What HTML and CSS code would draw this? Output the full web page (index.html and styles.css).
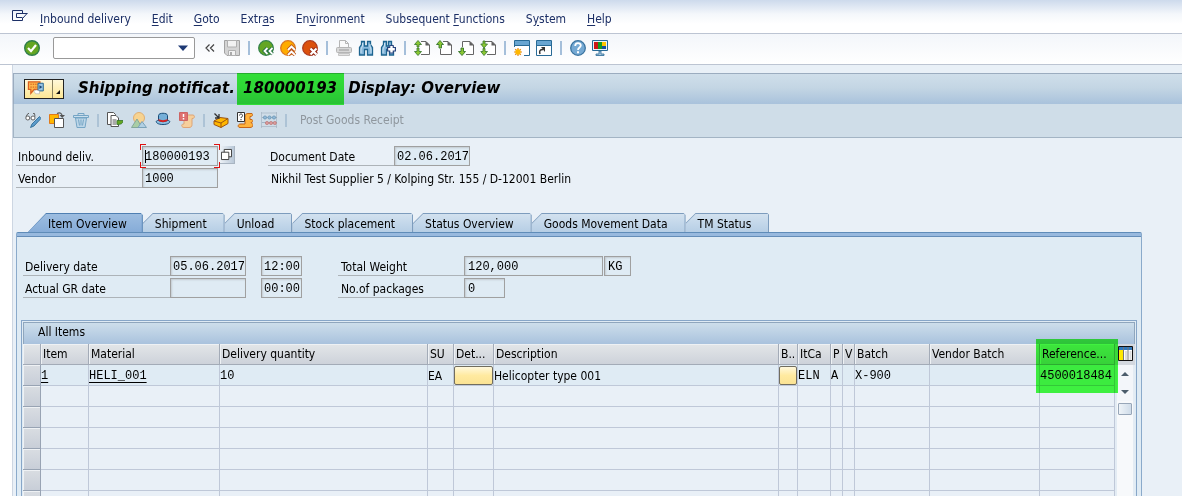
FILE: index.html
```html
<!DOCTYPE html>
<html lang="en">
<head>
<meta charset="utf-8">
<title>Shipping notificat. 180000193 Display: Overview</title>
<link rel="stylesheet" href="styles.css">
</head>
<body>
<nav class="menu" aria-label="Menu">
  <button class="icon menu-icon" aria-label="System menu"><svg viewBox="0 0 16 16"><path d="M10.500 4V1.500h-10v10h10V9M15.500 4.500h-11v4h6M15 4.500l-4 4.500" fill="none" stroke="#1c2f66"/></svg></button>
  <button class="menu-item"><u>I</u>nbound delivery</button>
  <button class="menu-item"><u>E</u>dit</button>
  <button class="menu-item"><u>G</u>oto</button>
  <button class="menu-item">Extr<u>a</u>s</button>
  <button class="menu-item">En<u>v</u>ironment</button>
  <button class="menu-item">Subsequent <u>F</u>unctions</button>
  <button class="menu-item">S<u>y</u>stem</button>
  <button class="menu-item"><u>H</u>elp</button>
</nav>

<div class="toolbar">
  <button class="icon" aria-label="Enter"><svg viewBox="0 0 16 16"><circle cx="8" cy="8" r="7.300" fill="#64a622" stroke="#2f7d4c" stroke-width="1.400"/><path d="M4 8l3 3.200 5-6.200" fill="none" stroke="#fff" stroke-width="2.200"/></svg></button>
  <div class="command">
    <input class="command-input" type="text" aria-label="Command">
    <button class="command-drop" aria-label="Command history"><svg viewBox="0 0 10 6"><path d="M0 .5h10L5 6z" fill="#1f3a75"/></svg></button>
  </div>
  <button class="icon collapse" aria-label="Collapse"><svg viewBox="0 0 16 16"><path d="M7.500 4.500L4 8l3.500 3.500M12 4.500L8.500 8l3.500 3.500" fill="none" stroke="#444" stroke-width="1.200"/></svg></button>
  <button class="icon" aria-label="Save"><svg viewBox="0 0 16 16"><path d="M.5.5h15v15H3l-2.500-2.500z" fill="#d4d4d4" stroke="#a2a2a2"/><path d="M3.500.5h9v6.500h-9z" fill="#f2f2f2" stroke="#b0b0b0"/><path d="M4.500 10.500h7v5h-7z" fill="#f2f2f2" stroke="#b0b0b0"/><path d="M6 12h2v3H6z" fill="#aaa"/></svg></button>
  <span class="sep"></span>
  <button class="icon" aria-label="Back"><svg viewBox="0 0 16 16"><circle cx="8" cy="8" r="7.300" fill="#64a622" stroke="#34834a" stroke-width="1.300"/><path d="M9.500 8L6.500 11l3 3M14.500 8l-3 3 3 3" fill="none" stroke="#24713f" stroke-width="3.600"/><path d="M9.500 8L6.500 11l3 3M14.500 8l-3 3 3 3" fill="none" stroke="#fff" stroke-width="1.800"/></svg></button>
  <button class="icon" aria-label="Exit"><svg viewBox="0 0 16 16"><circle cx="8" cy="8" r="7.300" fill="#ffac00" stroke="#da7722" stroke-width="1.300"/><path d="M8 10l3.500-3.500L15 10M8 15l3.500-3.500L15 15" fill="none" stroke="#bc5a20" stroke-width="3.600"/><path d="M8 10l3.500-3.500L15 10M8 15l3.500-3.500L15 15" fill="none" stroke="#fff" stroke-width="1.800"/></svg></button>
  <button class="icon" aria-label="Cancel"><svg viewBox="0 0 16 16"><circle cx="8" cy="8" r="7.300" fill="#dc510d" stroke="#ad3c20" stroke-width="1.300"/><path d="M8.500 8.500l6 6M14.500 8.500l-6 6" stroke="#952b18" stroke-width="4"/><path d="M8.500 8.500l6 6M14.500 8.500l-6 6" stroke="#fff" stroke-width="2.200"/></svg></button>
  <span class="sep"></span>
  <button class="icon" aria-label="Print"><svg viewBox="0 0 16 16"><path d="M3.500 8V.5h6l3 3V8" fill="#fafafa" stroke="#b5b5b5"/><path d="M9.500.5v3h3" fill="none" stroke="#b5b5b5"/><rect x=".5" y="7.500" width="15" height="5" rx="1" fill="#d8d8d8" stroke="#b5b5b5"/><path d="M3 10h10" stroke="#999"/><path d="M2.500 13.500h11v2h-11z" fill="#e2e2e2" stroke="#c4c4c4"/></svg></button>
  <button class="icon" aria-label="Find"><svg viewBox="0 0 16 16"><path d="M3.500 1.500h3v4.500h3V1.500h3v3l2 3v7.500h-5V9.500h-3V15h-5V7.500l2-3z" fill="#88b9dc" stroke="#1d648f" stroke-width="1.300"/><path d="M4.500 3v3l-1.500 3v4M12 4v3l1 2v4" fill="none" stroke="#c9e1f1"/></svg></button>
  <button class="icon" aria-label="Find next"><svg viewBox="0 0 16 16"><path d="M3.500 1.500h3v4.500h2V1.500h3v3l2 3v7.500h-4V9.500h-3V15h-5V7.500l2-3z" fill="#88b9dc" stroke="#1d648f" stroke-width="1.300"/><path d="M4.500 3v3l-1.500 3v4" fill="none" stroke="#c9e1f1"/><path d="M11.500 5v8.500M7 9.200h9" stroke="#29447d" stroke-width="4.500"/><path d="M11.500 6v6.500M8.200 9.200h6.600" stroke="#fff" stroke-width="2.400"/></svg></button>
  <span class="sep"></span>
  <button class="icon" aria-label="First page"><svg viewBox="0 0 16 16"><path d="M7 1.500h5l3.500 3.500v9.500H7" fill="#fff" stroke="#666"/><path d="M11.500 1v4.500H16z" fill="#5f5f5f"/><path d="M4 .5L.5 4.500H3V7h2V4.500h2.500zM4 15.500L.5 11.500H3V8h2v3.500h2.500z" fill="#8cc832" stroke="#35752b" stroke-width=".8"/></svg></button>
  <button class="icon" aria-label="Previous page"><svg viewBox="0 0 16 16"><path d="M7 1.500h5l3.500 3.500v9.500h-11V9" fill="#fff" stroke="#666"/><path d="M11.500 1v4.500H16z" fill="#5f5f5f"/><path d="M4 .5L.5 4.500H3V8h2.500V4.500h2z" fill="#8cc832" stroke="#35752b" stroke-width=".9"/></svg></button>
  <button class="icon" aria-label="Next page"><svg viewBox="0 0 16 16"><path d="M4.500 7V1.500H12l3.500 3.500v9.500H8" fill="#fff" stroke="#666"/><path d="M11.500 1v4.500H16z" fill="#5f5f5f"/><path d="M4 15.500L.5 11.500H3V8h2.500v3.500h2z" fill="#8cc832" stroke="#35752b" stroke-width=".9"/></svg></button>
  <button class="icon" aria-label="Last page"><svg viewBox="0 0 16 16"><path d="M5 1.500h7l3.500 3.500v9.500H7" fill="#fff" stroke="#666"/><path d="M11.500 1v4.500H16z" fill="#5f5f5f"/><path d="M3 1v3H.8L4 8l3.500-4H5V1zM3 8.500v3H.8L4 15.500l3.500-4H5v-3z" fill="#8cc832" stroke="#35752b" stroke-width=".8"/></svg></button>
  <span class="sep"></span>
  <button class="icon" aria-label="New session"><svg viewBox="0 0 16 16"><path d="M.5 7V.5h15v15H10" fill="#fff" stroke="#286a96"/><path d="M1 1h14v4H1z" fill="#68a5d1"/><path d="M0 5.500h16" stroke="#286a96"/><path d="M4 8v8M0 12h8M1.200 9.200l5.600 5.600M6.800 9.200l-5.600 5.600" stroke="#e28618" stroke-width="1.200"/><circle cx="4" cy="12" r="2.700" fill="#ffb700"/></svg></button>
  <button class="icon" aria-label="Create shortcut"><svg viewBox="0 0 16 16"><path d="M.5.5h15v15H.5z" fill="#fff" stroke="#286a96"/><path d="M1 1h14v4H1z" fill="#68a5d1"/><path d="M0 5.500h16" stroke="#286a96"/><path d="M4 14c-1-3 0-4.500 3-4.500" fill="none" stroke="#333" stroke-width="1.500"/><path d="M5 7h4v5z" fill="#333"/></svg></button>
  <span class="sep"></span>
  <button class="icon" aria-label="Help"><svg viewBox="0 0 16 16"><circle cx="8" cy="8" r="7.300" fill="#75a9d3" stroke="#3a739f" stroke-width="1.300"/><path d="M5.200 6c0-4 5.600-3.600 5.600-.5C10.800 7.500 8 7.500 8 10" fill="none" stroke="#fff" stroke-width="1.800"/><path d="M7 11.300h2v2H7z" fill="#fff"/></svg></button>
  <button class="icon" aria-label="Customize layout"><svg viewBox="0 0 16 16"><path d="M.5.500h15v10H.5z" fill="#e9f3fa" stroke="#286a96"/><path d="M2 2h4v7H2z" fill="#ce1717"/><path d="M6 2h4v7H6z" fill="#159a1e"/><path d="M10 2h4v4h-4z" fill="#ffc400"/><path d="M10 6h4v3h-4z" fill="#114f9e"/><path d="M7 11h2v3h3v1.500H4V14h3z" fill="#a9c6de" stroke="#286a96" stroke-width=".8"/></svg></button>
</div>

<main class="work">
  <header class="title-bar">
    <div class="services">
      <button class="service-main" aria-label="Services for object"><svg viewBox="0 0 24 18"><path d="M1.500 1.500h12v8h-6l-3.500 4v-4H1.500z" fill="#ffb64b" stroke="#db5f20" stroke-width="1.300"/><path d="M3.500 4h8M3.500 7h8" stroke="#cf5417" stroke-dasharray="1.500 1"/><path d="M11.500 3h5.500v8h-5.500z" fill="#9bc6e5" stroke="#24648f"/><path d="M13 5l3 2-3 2z" fill="#1d4877"/><path d="M7 11l3-1 3 1v3H9z" fill="#fff" stroke="#aaa" stroke-width=".6"/></svg></button>
      <button class="service-drop" aria-label="More services"><svg viewBox="0 0 6 6"><path d="M5 1v4H1z" fill="#111"/></svg></button>
    </div>
    <h1 class="title">Shipping notificat. <mark class="title-mark">180000193</mark> Display: Overview</h1>
  </header>

  <div class="app-bar">
    <button class="icon" aria-label="Display/Change"><svg viewBox="0 0 16 16"><circle cx="2.800" cy="6" r="2" fill="#fff" stroke="#555" stroke-width=".9"/><circle cx="8" cy="6" r="2" fill="#fff" stroke="#555" stroke-width=".9"/><path d="M1 4.500L3 1.500h1M8 1.500h1.500l.5 3" fill="none" stroke="#555" stroke-width=".9"/><path d="M14.500 4.500L7 12l-1.500 3.500L9 14l7-7.500z" fill="#5b9bcc" stroke="#24648f" stroke-width=".8"/></svg></button>
    <button class="icon" aria-label="Other delivery"><svg viewBox="0 0 16 16"><path d="M.5 2.500h9v9h-9z" fill="#ffb700" stroke="#e07a1a"/><path d="M5.500 6.500h9v9h-9z" fill="#fff" stroke="#555"/><path d="M8 1.500c3-1.500 5 0 5 2" fill="none" stroke="#555" stroke-width="1.200"/><path d="M10.500 3H16l-2.800 3z" fill="#555"/></svg></button>
    <button class="icon" aria-label="Delete"><svg viewBox="0 0 16 16"><path d="M2.500 6h11L12 15.500H4z" fill="#bdd6e8" stroke="#75a5c5"/><path d="M.5 3.500h15v2H.500z" fill="#cbdfed" stroke="#75a5c5"/><path d="M5 3.500v-2h6v2M5.500 7.500l1 6M8 7.500v6M10.500 7.500l-1 6" fill="none" stroke="#75a5c5"/></svg></button>
    <span class="sep sep-app"></span>
    <button class="icon" aria-label="Document flow"><svg viewBox="0 0 16 16"><path d="M.5.5h6l2 2v10h-8z" fill="#fff" stroke="#555"/><path d="M4 3.500h5l2.500 2.500v8.500H4z" fill="#fff" stroke="#555"/><path d="M5.500 8h4M5.500 10h4M5.500 12h4" stroke="#555"/><path d="M10 8.500h6c0 3-2 4-6 4z" fill="#64a622" stroke="#35752b" stroke-width=".8"/></svg></button>
    <button class="icon" aria-label="Delivery overview"><svg viewBox="0 0 16 16"><circle cx="8" cy="6" r="5.500" fill="#f7d390" stroke="#dfae73"/><path d="M.5 15.500L6 7l5 8.500z" fill="#a9cda5" stroke="#83a79b"/><path d="M7 15.500l4-6 4.500 6z" fill="#b1d0e4" stroke="#7ba2b8"/></svg></button>
    <button class="icon" aria-label="Header details"><svg viewBox="0 0 16 16"><path d="M3.500 9V3.500c0-3 9-3 9 0V9" fill="#75afd8" stroke="#184d79"/><path d="M3.500 8.500C0 8 0 12.500 8 12.500s8-4.500 4.500-4c-2 1.500-7 1.500-9 0z" fill="#8dc0e3" stroke="#184d79"/><path d="M3.500 7c2 1.500 7 1.500 9 0v2c-3 1.500-6 1.500-9 0z" fill="#d42222"/></svg></button>
    <button class="icon" aria-label="Incompletion log"><svg viewBox="0 0 16 16"><path d="M5 15.500c-3 0-3-4 0-3.500V3h9c2 0 2 4-1 3.500v6c0 2-1 3-3 3z" fill="#f6cf9c" stroke="#dda476"/><path d="M.5.5h8v8h-8z" fill="#de7070" stroke="#cd6464"/><path d="M4.500 2v3M4.500 6v1.500" stroke="#fff" stroke-width="1.500"/></svg></button>
    <span class="sep sep-app"></span>
    <button class="icon" aria-label="Pack"><svg viewBox="0 0 16 16"><path d="M1 9l6-3.500 8 1v5L8 15.500l-7-3z" fill="#ffb700" stroke="#9c5412"/><path d="M1 9l7 2v4.500M8 11l7-4.500" fill="none" stroke="#9c5412"/><path d="M1.500 1.500l4 4M6 2v4H2" fill="none" stroke="#333" stroke-width="1.300"/></svg></button>
    <button class="icon" aria-label="Output"><svg viewBox="0 0 16 16"><path d="M3 15.500c-3 0-2-4 1-3.500h4V5.500c0-3 1-4 3-4h4c1 1 1 3-2 3v3h2c1.500 1 1 3-1 3l2 2c0 2-1 3-3 3z" fill="#ffb33d" stroke="#c46519"/><path d="M.5.5h7v9h-7z" fill="#fff" stroke="#333"/><path d="M2.500 3.500c0-2 3-2 3 0S4 4.500 4 6M4 7v1.300" fill="none" stroke="#333"/></svg></button>
    <button class="icon" aria-label="Statistics"><svg viewBox="0 0 16 16"><path d="M.5 0v16M15.500 0v16M0 1h16M0 14.500h16" stroke="#a5b5c3" stroke-width=".7"/><path d="M1 5.500h15M1 10.500h15" stroke="#8298ad" stroke-width=".6"/><g fill="#93bad9" stroke="#5f8eae" stroke-width=".7"><circle cx="4" cy="5.500" r="1.600"/><circle cx="8.500" cy="5.500" r="1.600"/><circle cx="13" cy="5.500" r="1.600"/></g><g fill="#dc9b9b" stroke="#ba7676" stroke-width=".7"><circle cx="6" cy="11" r="1.600"/><circle cx="10" cy="11" r="1.600"/><circle cx="13.800" cy="11" r="1.600"/></g></svg></button>
    <span class="sep sep-app"></span>
    <button class="text-button" disabled>Post Goods Receipt</button>
  </div>

  <form class="fields head-fields">
    <div class="row">
      <label class="field-label" for="deliv">Inbound deliv.</label>
      <span class="focus-box"><input class="field date" id="deliv" value="180000193" readonly><i class="caret"></i></span>
      <button class="match" type="button" aria-label="Search help"><svg viewBox="0 0 12 12"><path d="M3.500.5h8v8h-8z" fill="#fff" stroke="#333"/><path d="M.5 3.500h8v8h-8z" fill="#fff" stroke="#333"/></svg></button>
      <label class="field-label second" for="docdate">Document Date</label>
      <input class="field date" id="docdate" value="02.06.2017" readonly>
    </div>
    <div class="row">
      <label class="field-label" for="vendor">Vendor</label>
      <input class="field date" id="vendor" value="1000" readonly>
      <span class="vendor-name">Nikhil Test Supplier 5 / Kolping Str. 155 / D-12001 Berlin</span>
    </div>
  </form>

  <div class="tabs" role="tablist">
    <button class="tab active" role="tab" aria-selected="true">Item Overview</button>
    <button class="tab" role="tab">Shipment</button>
    <button class="tab" role="tab">Unload</button>
    <button class="tab" role="tab">Stock placement</button>
    <button class="tab" role="tab">Status Overview</button>
    <button class="tab" role="tab">Goods Movement Data</button>
    <button class="tab" role="tab">TM Status</button>
  </div>

  <section class="panel" role="tabpanel">
    <form class="fields">
      <div class="row">
        <label class="field-label wide" for="ddate">Delivery date</label>
        <input class="field date" id="ddate" value="05.06.2017" readonly>
        <input class="field time" aria-label="Delivery time" value="12:00" readonly>
        <label class="field-label third" for="weight">Total Weight</label>
        <input class="field weight" id="weight" value="120,000" readonly>
        <input class="field unit" aria-label="Weight unit" value="KG" readonly>
      </div>
      <div class="row">
        <label class="field-label wide" for="grdate">Actual GR date</label>
        <input class="field date" id="grdate" value="" readonly>
        <input class="field time" aria-label="Actual GR time" value="00:00" readonly>
        <label class="field-label third" for="packages">No.of packages</label>
        <input class="field count" id="packages" value="0" readonly>
      </div>
    </form>

    <div class="grid-frame">
      <h2 class="grid-title">All Items</h2>
      <div class="grid-body">
        <table class="grid">
          <colgroup><col class="c-sel"><col class="c-item"><col class="c-mat"><col class="c-qty"><col class="c-su"><col class="c-det"><col><col class="c-b"><col class="c-itca"><col class="c-p"><col class="c-p"><col class="c-batch"><col class="c-vendor"><col class="c-ref"></colgroup>
          <thead>
            <tr><th></th><th>Item</th><th>Material</th><th>Delivery quantity</th><th>SU</th><th>Det...</th><th>Description</th><th>B..</th><th>ItCa</th><th>P</th><th>V</th><th>Batch</th><th>Vendor Batch</th><th>Reference...</th></tr>
          </thead>
          <tbody>
            <tr class="filled"><td></td><td><a class="cell-link" href="#">1</a></td><td><a class="cell-link" href="#">HELI_001</a></td><td>10</td><td class="sans">EA</td><td><button class="cell-button" aria-label="Details"></button></td><td class="sans">Helicopter type 001</td><td><button class="cell-button" aria-label="Batch split"></button></td><td>ELN</td><td>A</td><td></td><td>X-900</td><td></td><td>4500018484</td></tr>
            <tr><td></td><td></td><td></td><td></td><td></td><td></td><td></td><td></td><td></td><td></td><td></td><td></td><td></td><td></td></tr>
            <tr><td></td><td></td><td></td><td></td><td></td><td></td><td></td><td></td><td></td><td></td><td></td><td></td><td></td><td></td></tr>
            <tr><td></td><td></td><td></td><td></td><td></td><td></td><td></td><td></td><td></td><td></td><td></td><td></td><td></td><td></td></tr>
            <tr><td></td><td></td><td></td><td></td><td></td><td></td><td></td><td></td><td></td><td></td><td></td><td></td><td></td><td></td></tr>
            <tr><td></td><td></td><td></td><td></td><td></td><td></td><td></td><td></td><td></td><td></td><td></td><td></td><td></td><td></td></tr>
            <tr><td></td><td></td><td></td><td></td><td></td><td></td><td></td><td></td><td></td><td></td><td></td><td></td><td></td><td></td></tr>
          </tbody>
        </table>
        <div class="scroll">
          <button class="configure" aria-label="Configure columns"><svg viewBox="0 0 15 15"><path d="M.5.5h14v14H.5z" fill="#fff" stroke="#111"/><path d="M1 1h13v3H1z" fill="#2f78bd"/><path d="M1 4h4v10H1z" fill="#ffe800"/><path d="M5.500 1v13M10 1v13" stroke="#777"/><path d="M7 5h2v9H7zM11.500 5h2v9h-2z" fill="#ddd"/></svg></button>
          <button class="arrow" aria-label="Scroll up"><svg viewBox="0 0 8 4"><path d="M0 4h8L4 0z" fill="#4b5c6b"/></svg></button>
          <button class="arrow" aria-label="Scroll down"><svg viewBox="0 0 8 4"><path d="M0 0h8L4 4z" fill="#4b5c6b"/></svg></button>
          <div class="track"><div class="thumb"></div></div>
        </div>
        <div class="highlight"></div>
      </div>
    </div>
  </section>
</main>
</body>
</html>
```
FILE: styles.css
```css
* { box-sizing: border-box; }

body {
  margin: 0;
  height: 100vh;
  overflow: hidden;
  background: #fff;
  color: #000;
  font: 12px/16px "DejaVu Sans Condensed", "Noto Sans", sans-serif;
}

button, input {
  margin: 0;
  padding: 0;
  border: 0;
  background: none;
  color: inherit;
  font: inherit;
}

svg { display: block; width: 100%; height: 100%; }

.icon { flex: none; width: 16px; height: 16px; }

/* Menu and system toolbar */
.menu {
  display: flex;
  align-items: center;
  gap: 1px;
  height: 34px;
  padding: 4px 12px 0;
  border-bottom: 1px solid #bcc4d2;
  background: linear-gradient(#cddaec, #f4f7fb 14px, #fff 24px);
  color: #1c2f66;
}
.menu-icon { margin-right: 1px; margin-bottom: 4px; }
.menu-item { padding: 0 10px; white-space: nowrap; }
.menu-item u { text-underline-offset: 2px; }

.toolbar {
  display: flex;
  align-items: center;
  gap: 6px;
  height: 31px;
  padding: 0 24px;
  padding-bottom: 2px;
  border-bottom: 1px solid #bcc4d2;
  background: linear-gradient(#f3f6fa, #fff);
}
.command {
  display: flex;
  align-items: center;
  width: 142px;
  height: 22px;
  margin: 0 1px 0 7px;
  border: 1px solid #999;
  border-radius: 2px;
  background: #fff;
}
.command-input { flex: 1; min-width: 0; height: 20px; padding-left: 4px; outline: 0; }
.command-drop { width: 10px; height: 6px; margin-right: 6px; }
.sep { width: 6px; height: 14px; background: linear-gradient(#a5bfda, #a5bfda) center / 2px 100% no-repeat; }

/* Work area */
.work {
  margin-left: 12px;
  border-left: 1px solid #cdd6e2;
  padding-top: 8px;
  background: #e9f0f7;
}
.title-bar {
  display: flex;
  align-items: center;
  height: 31px;
  padding-left: 10px;
  border: solid #9bacbf;
  border-width: 1px 0 0 1px;
  background: linear-gradient(#cfdeea, #c4d6e4 45%, #a9c2dc);
}
.services {
  display: flex;
  width: 40px;
  height: 20px;
  border: 1px solid #222;
  background: linear-gradient(#fff8d9, #fde795);
}
.service-main { width: 28px; padding: 0 2px; border-right: 1px solid #8a8260; }
.service-drop { display: flex; flex: 1; align-items: flex-end; justify-content: center; padding-bottom: 3px; }
.service-drop svg { width: 6px; height: 6px; }
.title {
  margin: 0 0 0 14px;
  font-family: "DejaVu Sans", sans-serif;
  font-size: 15px;
  line-height: 30px;
  font-style: italic;
  font-weight: bold;
  white-space: nowrap;
}
.title-mark {
  display: inline-block;
  margin: 0 -1px 0 -3px;
  padding: 0 7px 2px 6px;
  background: #3cff3c;
  mix-blend-mode: multiply;
}

.app-bar {
  display: flex;
  align-items: center;
  gap: 8px;
  height: 34px;
  padding: 0 0 1px 11px;
  border: solid #a3b4c4;
  border-width: 0 0 1px 1px;
  background: #cfdde8;
}
.sep-app { width: 2px; height: 13px; background: #adc3d6; }
.text-button { padding-left: 5px; color: #8f979e; }

/* Label and field rows */
.fields { display: flex; flex-direction: column; gap: 2px; }
.head-fields { padding: 8px 0 0 3px; }
.row { display: flex; height: 20px; white-space: nowrap; }
.field-label { flex: none; width: 126px; padding: 3px 0 0 2px; border-bottom: 1px solid #adb3b8; }
.field-label.second { margin-left: 33px; }
.field-label.wide { width: 147px; }
.field-label.third { margin-left: 36px; padding-left: 3px; }
.field {
  height: 20px;
  padding: 1px 0 0 3px;
  border: 1px solid #a0a0a0;
  background: #dfebf4;
  box-shadow: inset 1px 1px 2px #c2cad0;
  font-family: "Liberation Mono", monospace;
  outline: 0;
}
.date { width: 76px; padding-left: 2px; }
.time { width: 41px; margin-left: 15px; padding-left: 2px; }
.weight { width: 139px; }
.unit { width: 27px; margin-left: 1px; }
.count { width: 41px; }
.focus-box { position: relative; }
.focus-box::after {
  content: "";
  position: absolute;
  inset: -2px;
  pointer-events: none;
  --r: linear-gradient(#e01010, #e01010);
  background:
    var(--r) 0 0 / 6px 1px, var(--r) 0 0 / 1px 6px,
    var(--r) 100% 0 / 6px 1px, var(--r) 100% 0 / 1px 6px,
    var(--r) 0 100% / 6px 1px, var(--r) 0 100% / 1px 6px,
    var(--r) 100% 100% / 6px 1px, var(--r) 100% 100% / 1px 6px;
  background-repeat: no-repeat;
}
.caret { position: absolute; left: 3px; top: 4px; width: 1px; height: 13px; background: #000; }
.match {
  width: 16px;
  height: 18px;
  margin-left: 1px;
  padding: 2px;
  border: solid #a9b5c2;
  border-width: 0 1px 1px 0;
  background: linear-gradient(90deg, #f1f5f9, #b9c8d8);
}
.vendor-name { margin-left: 53px; padding-top: 3px; }

/* Tabs */
.tabs { display: flex; height: 19px; margin: 25px 0 0 15px; }
.tab {
  position: relative;
  z-index: 0;
  padding: 3px 18px 0 12px;
  white-space: nowrap;
  background: #7d9cbd;
  clip-path: polygon(0 100%, 0 10px, 10px 0, calc(100% - 2px) 0, 100% 2px, 100% 100%);
}
.tab::before {
  content: "";
  position: absolute;
  z-index: -1;
  inset: 1px 1px 0 0;
  background: linear-gradient(#d2e1ef, #b6cee5);
  clip-path: polygon(0 100%, 0 10px, 10px 0, 100% 0, 100% 100%);
}
.tab.active {
  padding: 3px 16px 0 20px;
  background: #4f7fb2;
  clip-path: polygon(0 100%, 18px 0, calc(100% - 2px) 0, 100% 2px, 100% 100%);
}
.tab.active::before {
  background: linear-gradient(#9dbde0, #86acd8);
  clip-path: polygon(0 100%, 18px 0, 100% 0, 100% 100%);
}

.panel {
  margin: 0 40px 0 3px;
  padding: 23px 4px 0;
  border: 1px solid #8aaacb;
  border-top-color: #5f8cb8;
  border-radius: 2px 2px 0 0;
  background: linear-gradient(#98b9de 3px, #648db8 3px 4px, #dfebf4 4px);
}
.panel .fields { padding-left: 2px; }

/* Items table */
.grid-frame {
  margin-top: 22px;
  padding: 1px;
  border: 1px solid #87a6c8;
}
.grid-title {
  margin: 0;
  height: 22px;
  padding: 0 14px;
  border: solid #8fa6bd;
  border-width: 1px 1px 0;
  background: linear-gradient(#cddeeb, #a9c2dd);
  font-size: 12px;
  line-height: 18px;
  font-weight: normal;
}
.grid-body { position: relative; display: flex; }
.grid { flex: 1; width: 0; table-layout: fixed; border-collapse: separate; border-spacing: 0; }
.c-sel { width: 18px; }
.c-item { width: 48px; }
.c-mat { width: 131px; }
.c-qty { width: 208px; }
.c-su { width: 26px; }
.c-det { width: 40px; }
.c-b { width: 19px; }
.c-itca { width: 33px; }
.c-p { width: 12px; }
.c-batch { width: 75px; }
.c-vendor { width: 110px; }
.c-ref { width: 75px; }
.grid th, .grid td {
  height: 21px;
  padding: 0;
  overflow: hidden;
  border: solid #bfc8d8;
  border-width: 0 1px 1px 0;
  background: #e9f0f7;
  text-align: left;
  white-space: nowrap;
  font-weight: normal;
  line-height: 18px;
}
.grid th {
  padding-left: 2px;
  border-color: #a3abb7;
  background: linear-gradient(#e3e6e8, #cdd2da);
  box-shadow: inset 1px 1px #eef1f4;
}
.grid td { padding-top: 1px; font-family: "Liberation Mono", monospace; }
.grid td.sans { font-family: inherit; }
.grid .filled td { background: #dfebf4; }
.grid tbody td:first-child {
  border-color: #98a3b3;
  background: linear-gradient(#d9dde2, #c8ced8);
  box-shadow: inset 1px 1px #eef1f4;
}
.cell-link { color: inherit; text-underline-offset: 3px; }
.cell-button {
  display: block;
  width: 100%;
  height: 19px;
  border: 1px solid #716d5f;
  border-radius: 2px;
  background: linear-gradient(#fff8dc, #ffeaa0 50%, #fbe394);
}
.scroll { display: flex; flex-direction: column; align-items: center; width: 20px; background: #e3ecf4; }
.configure { width: 20px; height: 21px; padding: 2px 2px 4px 3px; background: #d3d8df; }
.arrow { display: flex; align-items: center; justify-content: center; width: 16px; height: 18px; background: #f3f6fa; }
.arrow svg { width: 8px; height: 4px; }
.track { flex: 1; width: 16px; padding-top: 2px; background: #f7f9fb; }
.thumb { height: 12px; margin: 0 1px; border: 1px solid #97a6b8; border-radius: 1px; background: linear-gradient(90deg, #eff4f8, #cfdce9); }
.highlight {
  position: absolute;
  top: -5px;
  right: 17px;
  width: 82px;
  height: 54px;
  background: #44ff42;
  mix-blend-mode: multiply;
}
```
